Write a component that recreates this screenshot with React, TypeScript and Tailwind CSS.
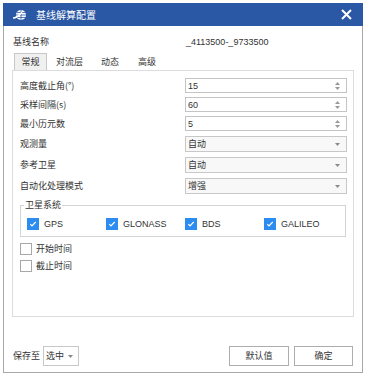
import React from 'react';

const FONT = '[font-family:"Noto_Sans_CJK_SC","Liberation_Sans",sans-serif]';
const LATIN = "[font-family:'Liberation_Sans','Noto_Sans_CJK_SC',sans-serif]";

const SPIN_ROWS = [
  { label: '高度截止角(°)', value: '15' },
  { label: '采样间隔(s)', value: '60' },
  { label: '最小历元数', value: '5' },
];

const SELECT_ROWS = [
  { label: '观测量', value: '自动' },
  { label: '参考卫星', value: '自动' },
  { label: '自动化处理模式', value: '增强' },
];

const SYSTEMS = ['GPS', 'GLONASS', 'BDS', 'GALILEO'];

const Caret = () => (
  <svg width="5" height="3" viewBox="0 0 5 3">
    <path d="M0 0h5L2.5 3z" fill="#8a8a8a" />
  </svg>
);

const Spinner = () => (
  <div className="flex flex-col items-center gap-[2px]">
    <svg width="5" height="3" viewBox="0 0 5 3">
      <path d="M0 3h5L2.5 0z" fill="#999" />
    </svg>
    <svg width="5" height="3" viewBox="0 0 5 3">
      <path d="M0 0h5L2.5 3z" fill="#999" />
    </svg>
  </div>
);

const CheckBox = ({ checked }: { checked: boolean }) =>
  checked ? (
    <div className="w-[12px] h-[12px] bg-[#2d8cf0] flex items-center justify-center">
      <svg width="8" height="8" viewBox="0 0 8 8" fill="none" stroke="white" strokeWidth="1.2">
        <path d="M1.3 4.2l1.7 1.7 3.7-3.9" />
      </svg>
    </div>
  ) : (
    <div className="w-[12px] h-[12px] border border-[#a8a8a8] bg-white" />
  );

export default function App() {
  return (
    <div className={`w-[366px] h-[374px] bg-white pl-[3px] pt-[3px] text-[9px] leading-[12px] text-[#333] ${FONT}`}>
      <div className="w-[360px] h-[370px] border border-[#a8a8a8] border-t-0 flex flex-col">
        {/* Title bar */}
        <div className="h-[23px] bg-[#2b58a4] flex items-center pl-[10px] pr-[10px] -mx-px">
          <svg width="14" height="12" viewBox="0 0 14 12">
            <circle cx="8" cy="6" r="5" fill="white" />
            <path d="M4 3.5h9M3 6h10M4 8.5h9" stroke="#2b58a4" strokeWidth="0.8" />
            <path d="M8 1v10" stroke="#2b58a4" strokeWidth="0.8" />
            <path d="M0 9c3 0 6-2 9-6" stroke="white" strokeWidth="1.4" fill="none" />
          </svg>
          <span className="ml-[9px] text-white text-[10px]">基线解算配置</span>
          <svg className="ml-auto mr-[1px]" width="11" height="11" viewBox="0 0 11 11" stroke="white" strokeWidth="2">
            <path d="M1 1l9 9M10 1l-9 9" />
          </svg>
        </div>

        {/* Baseline name */}
        <div className="flex items-center h-[14px] mt-[9px] pl-[9px]">
          <span className="w-[173px]">基线名称</span>
          <span className={LATIN}>_4113500-_9733500</span>
        </div>

        {/* Tabs */}
        <div className="flex items-end h-[17px] mt-[4px] pl-[10px]">
          <div className="w-[33px] h-[17px] bg-[#f0f0f0] border border-b-0 border-[#c8c8c8] flex items-center justify-center">
            常规
          </div>
          <div className="h-[16px] flex items-center ml-[9px]">对流层</div>
          <div className="h-[16px] flex items-center ml-[18px]">动态</div>
          <div className="h-[16px] flex items-center ml-[19px]">高级</div>
        </div>

        {/* Tab panel */}
        <div className="ml-[8px] w-[342px] h-[247px] border border-[#dcdcdc] pt-[7px] pl-[7px]">
          <div className="flex flex-col gap-[4px]">
            {SPIN_ROWS.map((r) => (
              <div key={r.label} className="flex items-center h-[15px]">
                <span className="w-[165px]">{r.label}</span>
                <div className="w-[162px] h-[15px] border border-[#c4c4c4] bg-white flex items-center pl-[2px] pr-[6px]">
                  <span className={LATIN}>{r.value}</span>
                  <div className="ml-auto">
                    <Spinner />
                  </div>
                </div>
              </div>
            ))}
          </div>
          <div className="flex flex-col gap-[5px] mt-[5px]">
            {SELECT_ROWS.map((r) => (
              <div key={r.label} className="flex items-center h-[16px]">
                <span className="w-[165px]">{r.label}</span>
                <div className="w-[162px] h-[16px] border border-[#c8c8c8] bg-[#f8f8f8] flex items-center pl-[2px] pr-[6px]">
                  <span>{r.value}</span>
                  <div className="ml-auto">
                    <Caret />
                  </div>
                </div>
              </div>
            ))}
          </div>

          {/* Satellite systems group */}
          <div className="relative mt-[11px] w-[326px] h-[32px] border border-[#d4d4d4] flex items-center pt-[5px] pl-[6px]">
            <span className="absolute -top-[7px] left-[3px] bg-white px-[1px]">卫星系统</span>
            {SYSTEMS.map((s) => (
              <div key={s} className="flex items-center w-[79px]">
                <CheckBox checked />
                <span className={`ml-[5px] ${LATIN}`}>{s}</span>
              </div>
            ))}
          </div>

          <div className="flex items-center mt-[5px] h-[13px]">
            <CheckBox checked={false} />
            <span className="ml-[4px]">开始时间</span>
          </div>
          <div className="flex items-center mt-[4px] h-[13px]">
            <CheckBox checked={false} />
            <span className="ml-[4px]">截止时间</span>
          </div>
        </div>

        {/* Footer */}
        <div className="flex items-center mt-[29px] pl-[9px] pr-[9px]">
          <span>保存至</span>
          <div className="ml-[3px] w-[36px] h-[20px] border border-[#c8c8c8] bg-white flex items-center pl-[2px] pr-[5px] whitespace-nowrap">
            <span>选中</span>
            <div className="ml-auto">
              <Caret />
            </div>
          </div>
          <div className="ml-auto w-[60px] h-[20px] border border-[#adadad] bg-white flex items-center justify-center">
            默认值
          </div>
          <div className="ml-[5px] w-[59px] h-[20px] border border-[#adadad] bg-white flex items-center justify-center">
            确定
          </div>
        </div>
      </div>
    </div>
  );
}
